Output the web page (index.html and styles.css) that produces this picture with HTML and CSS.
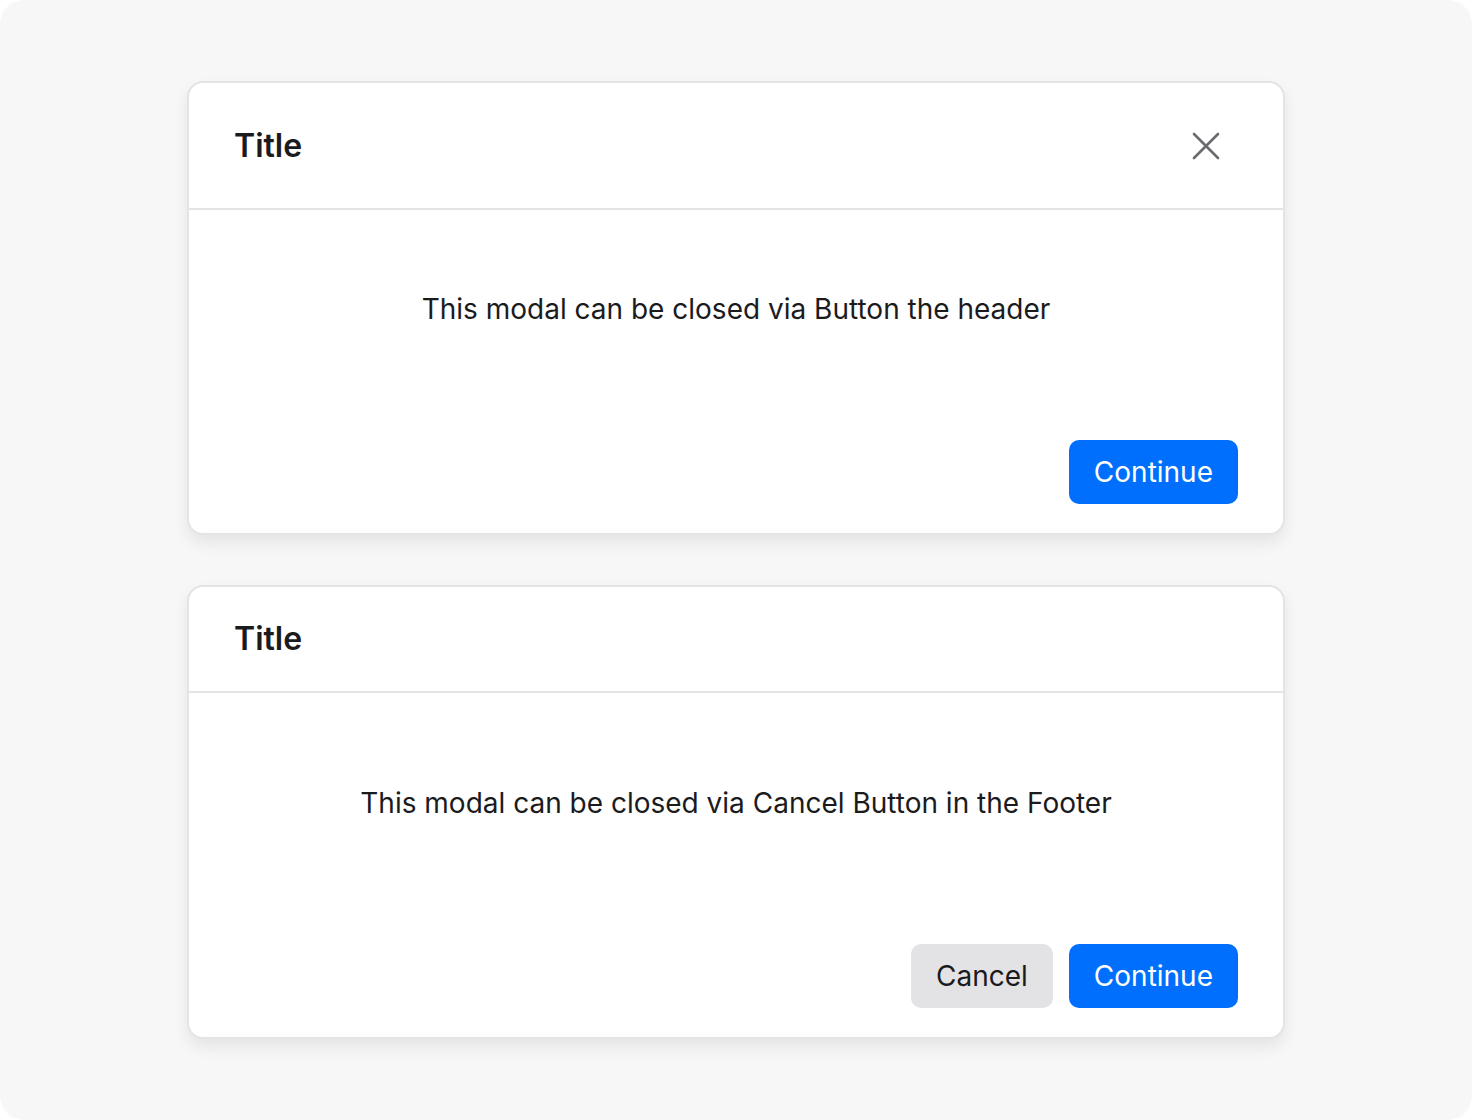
FILE: index.html
```html
<!DOCTYPE html>
<html lang="en">
<head>
  <meta charset="UTF-8">
  <title>Modal examples</title>
  <link rel="stylesheet" href="styles.css">
</head>
<body>

  <div class="canvas">

    <div class="modal">
      <div class="modal-header">
        <h2 class="modal-title">Title</h2>
        <button class="close-btn" aria-label="Close">
          <svg width="28" height="28" viewBox="0 0 28 28" fill="none">
            <path d="M2 2 L26 26 M26 2 L2 26" stroke="#6a6a70" stroke-width="2.6" stroke-linecap="round"/>
          </svg>
        </button>
      </div>
      <div class="modal-body">
        <p>This modal can be closed via Button the header</p>
      </div>
      <div class="modal-footer">
        <button class="btn btn-primary">Continue</button>
      </div>
    </div>

    <div class="modal">
      <div class="modal-header">
        <h2 class="modal-title">Title</h2>
      </div>
      <div class="modal-body">
        <p>This modal can be closed via Cancel Button in the Footer</p>
      </div>
      <div class="modal-footer">
        <button class="btn btn-secondary">Cancel</button>
        <button class="btn btn-primary">Continue</button>
      </div>
    </div>

  </div>

</body>
</html>
```

FILE: styles.css
```css
* {
  box-sizing: border-box;
}

body {
  margin: 0;
  background: #fff;
  font-family: Inter, "Noto Sans", sans-serif;
  color: #1b1b1d;
}

.canvas {
  height: 1120px;
  background: #f7f7f7;
  border-radius: 24px;
  padding-top: 81px;
  display: flex;
  flex-direction: column;
  align-items: center;
  gap: 50px;
}

.modal {
  width: 1098px;
  height: 454px;
  background: #fff;
  border: 2px solid #e4e4e4;
  border-radius: 16px;
  box-shadow: 0 8px 16px rgba(0,0,0,0.08);
  display: flex;
  flex-direction: column;
}

.modal-header {
  display: flex;
  align-items: center;
  justify-content: space-between;
  padding: 35px 46px 35px 45px;
  border-bottom: 2px solid #e4e4e4;
}

.modal-title {
  margin: 0;
  font-size: 32px;
  line-height: 34px;
  font-weight: 600;
}

.close-btn {
  width: 62px;
  height: 55px;
  padding: 0;
  border: none;
  background: none;
  display: flex;
  align-items: center;
  justify-content: center;
}

.modal-body {
  flex: 1;
  display: flex;
  align-items: center;
  justify-content: center;
  padding: 0 46px;
}

.modal-body p {
  margin: 0;
  font-size: 28px;
  line-height: 36px;
}

.modal-footer {
  display: flex;
  justify-content: flex-end;
  gap: 16px;
  padding: 32px 45px 29px;
}

.btn {
  height: 64px;
  padding: 0 25px;
  border: none;
  border-radius: 10px;
  font-family: inherit;
  font-size: 28px;
}

.btn-primary {
  background: #006ffd;
  color: #fff;
}

.btn-secondary {
  background: #e3e3e6;
  color: #1b1b1d;
}
```
